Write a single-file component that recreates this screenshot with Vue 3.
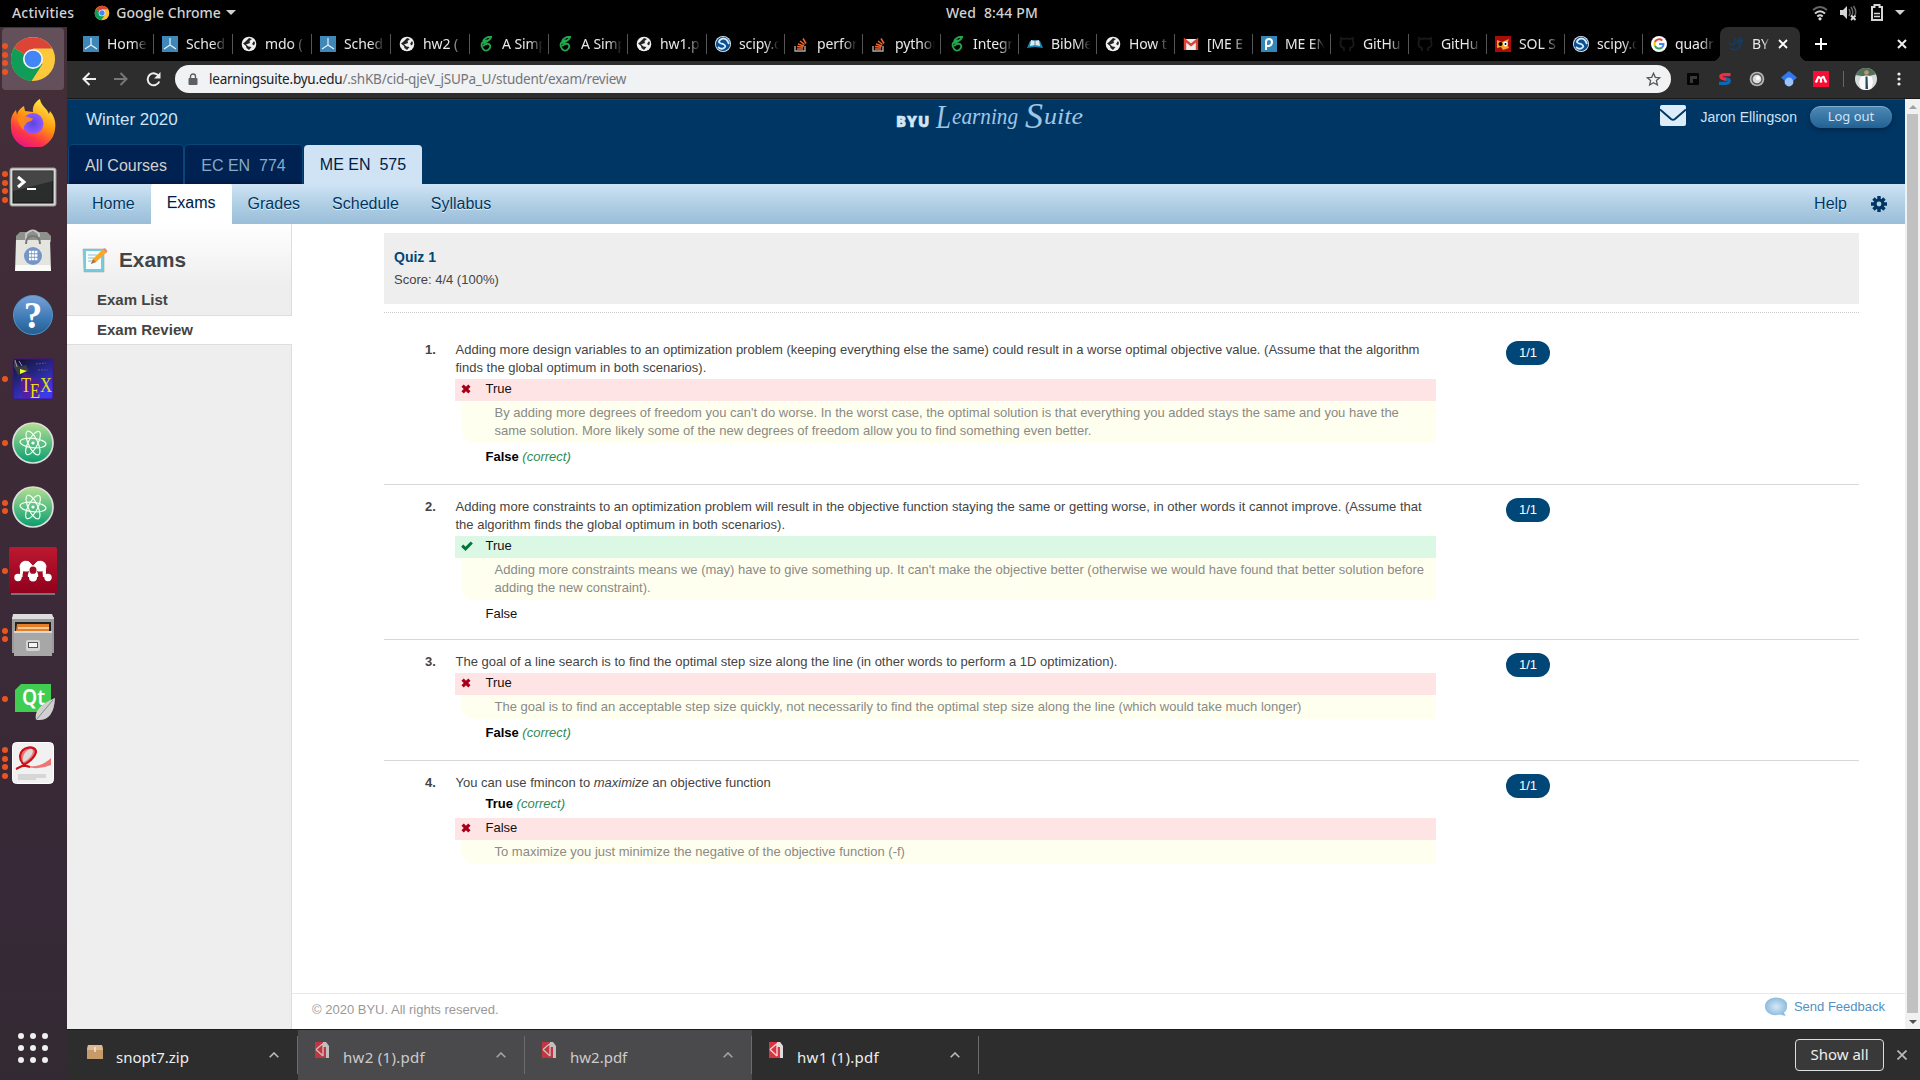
<script setup>
const raw = [
  ['axis', 'Home'], ['axis', 'Sched'], ['globe', 'mdo ('], ['axis', 'Sched'], ['globe', 'hw2 ('],
  ['leaf', 'A Simp'], ['leaf', 'A Simp'], ['globe', 'hw1.p'], ['scipy', 'scipy.o'], ['stack', 'perfor'],
  ['stack', 'python'], ['leaf', 'Integr'], ['book', 'BibMe'], ['globe', 'How t'], ['gmail', '[ME E'],
  ['pp', 'ME EN'], ['github', 'GitHu'], ['github', 'GitHu'], ['sol', 'SOL S'], ['scipy', 'scipy.o'], ['google', 'quadra'],
]
const tabs = raw.map(([icon, label], i) => ({ icon, label, wide: i < 8 }))

const dock = [
  { icon: 'chrome', dots: 4, active: true }, { icon: 'firefox', dots: 0 }, { icon: 'terminal', dots: 4 },
  { icon: 'bag', dots: 0 }, { icon: 'help', dots: 0 }, { icon: 'tex', dots: 1 }, { icon: 'atom', dots: 1 },
  { icon: 'atom', dots: 2 }, { icon: 'mendeley', dots: 1 }, { icon: 'files', dots: 2 }, { icon: 'qt', dots: 1 },
  { icon: 'pdf', dots: 4 },
]

const questions = [
  {
    n: 1,
    text: ['Adding more design variables to an optimization problem (keeping everything else the same) could result in a worse optimal objective value. (Assume that the algorithm', 'finds the global optimum in both scenarios).'],
    answers: [
      { label: 'True', mark: 'wrong', note: ["By adding more degrees of freedom you can't do worse. In the worst case, the optimal solution is that everything you added stays the same and you have the", 'same solution. More likely some of the new degrees of freedom allow you to find something even better.'] },
      { label: 'False', correct: true },
    ],
  },
  {
    n: 2,
    text: ['Adding more constraints to an optimization problem will result in the objective function staying the same or getting worse, in other words it cannot improve. (Assume that', 'the algorithm finds the global optimum in both scenarios).'],
    answers: [
      { label: 'True', mark: 'right', note: ["Adding more constraints means we (may) have to give something up. It can't make the objective better (otherwise we would have found that better solution before", 'adding the new constraint).'] },
      { label: 'False' },
    ],
  },
  {
    n: 3,
    text: ['The goal of a line search is to find the optimal step size along the line (in other words to perform a 1D optimization).'],
    answers: [
      { label: 'True', mark: 'wrong', note: ['The goal is to find an acceptable step size quickly, not necessarily to find the optimal step size along the line (which would take much longer)'] },
      { label: 'False', correct: true },
    ],
  },
  {
    n: 4,
    text: [],
    answers: [
      { label: 'True', correct: true },
      { label: 'False', mark: 'wrong', note: ['To maximize you just minimize the negative of the objective function (-f)'] },
    ],
  },
]

const downloads = [
  { name: 'snopt7.zip', zip: true }, { name: 'hw2 (1).pdf', dim: true }, { name: 'hw2.pdf', dim: true }, { name: 'hw1 (1).pdf' },
]
const grid = [0, 1, 2, 3, 4, 5, 6, 7, 8]
</script>

<template>
  <div class="screen">
    <header class="topbar">
      <div class="top-left">
        <span>Activities</span>
        <svg class="mini" viewBox="0 0 48 48"><circle cx="24" cy="24" r="22" fill="#fbc02d" /><path d="M24 24 5 13A22 22 0 0 1 43 13H24Z" fill="#db4437" /><path d="M24 24 5 13A22 22 0 0 0 22 46L33 29Z" fill="#0f9d58" /><circle cx="24" cy="24" r="10" fill="#fff" /><circle cx="24" cy="24" r="8" fill="#4285f4" /></svg>
        <span class="appname">Google Chrome</span>
        <i class="tri"></i>
      </div>
      <div class="clock">Wed&nbsp; 8:44 PM</div>
      <div class="tray">
        <svg width="16" height="16" viewBox="0 0 16 16" fill="none" stroke="#d5d5d5" stroke-width="2"><path d="M1 5Q8-1 15 5" stroke="#666" /><path d="M3 8.5Q8 4 13 8.5M5.3 11.4Q8 9 10.7 11.4" /><circle cx="8" cy="13.8" r="1.6" fill="#ddd" stroke="none" /></svg>
        <svg width="18" height="16" viewBox="0 0 18 16"><path d="M1 5H4L8 1V14L4 10H1Z" fill="#d5d5d5" /><path d="M10 4Q12 7.500 10 11M12 2Q15.500 7.500 12 12M14.500 1Q18 6 16 10" fill="none" stroke="#666" stroke-width="1.500" /><path d="M12 10.500 16.500 15M16.500 10.500 12 15" stroke="#ddd" stroke-width="1.800" /></svg>
        <svg width="14" height="17" viewBox="0 0 14 17"><path d="M2 3H4.500V1H9.500V3H12V16H2Z" fill="none" stroke="#d5d5d5" stroke-width="2" /><path d="M4 9.500H10M4 12.500H10" stroke="#d5d5d5" stroke-width="1.700" /></svg>
        <i class="tri"></i>
      </div>
    </header>

    <div class="body">
      <nav class="dock">
        <div v-for="(d, i) in dock" :key="i" class="slot" :class="{ on: d.active }">
          <div class="dots"><i v-for="k in d.dots" :key="k"></i></div>
          <svg v-if="d.icon === 'chrome'" width="46" height="46" viewBox="0 0 48 48"><circle cx="24" cy="24" r="23" fill="#fdc93b" /><path d="M24 24 4.100 12.500A23 23 0 0 1 44 13H24Z" fill="#db4437" /><path d="M24 24 4.100 12.500A23 23 0 0 0 22.500 47L34 29Z" fill="#0f9d58" /><circle cx="24" cy="24" r="10.500" fill="#f1f1f1" /><circle cx="24" cy="24" r="8.700" fill="#4285f4" /></svg>
          <svg v-else-if="d.icon === 'firefox'" width="48" height="48" viewBox="0 0 48 48"><defs><linearGradient id="ff" x1="0.800" y1="0" x2="0.300" y2="1"><stop offset="0" stop-color="#fff44f" /><stop offset="0.450" stop-color="#ff980e" /><stop offset="0.750" stop-color="#ff3647" /><stop offset="1" stop-color="#e31587" /></linearGradient><radialGradient id="fp"><stop offset="0" stop-color="#5b45e0" /><stop offset="1" stop-color="#9059ff" /></radialGradient></defs><path d="M2 27C1 19 4 14 7 11L8 16C9 11 12 9 15 7L16 12 24 13C23 7 27 2 31 0 32 7 38 9 40 15L41 12C46 18 47 24 46 30A22 21 0 0 1 2 27Z" fill="url(#ff)" /><circle cx="24" cy="24.500" r="10.500" fill="url(#fp)" /><path d="M8 18C13 15 18 18 24 19.500 23 23 18 22 17 25Q14 27 15 31 9 27 8 18Z" fill="#ff8a16" opacity="0.900" /></svg>
          <svg v-else-if="d.icon === 'terminal'" width="48" height="40" viewBox="0 0 48 40"><rect x="1" y="1" width="46" height="38" rx="2" fill="#d7d7d4" stroke="#999" /><rect x="4" y="4" width="40" height="32" fill="#2b2d2c" stroke="#111" /><path d="M4 4H44V14L4 24Z" fill="#555" opacity="0.600" /><path d="M9 10 15 15 9 20" fill="none" stroke="#fff" stroke-width="3" /><path d="M18 22H27" stroke="#fff" stroke-width="2" /></svg>
          <svg v-else-if="d.icon === 'bag'" width="40" height="44" viewBox="0 0 40 44"><path d="M3 7 7 3H34L38 7V13H3Z" fill="#8f918c" /><path d="M13 14V5Q20-2 26 5V8" fill="none" stroke="#c5c5c0" stroke-width="2" /><path d="M3 11H37L38 42H2Z" fill="#e5e5df" /><path d="M3 36H37L38 42H2Z" fill="#fafaf8" /><path d="M13 15Q13 7 20 7T27 15" fill="none" stroke="#777" stroke-width="2" /><circle cx="20" cy="27" r="9" fill="#7595c7" /><path d="M16 23h2.400M19 23h2.400M22 23h2.400M16 26.500h2.400M19 26.500h2.400M22 26.500h2.400M16 30h2.400M19 30h2.400M22 30h2.400" stroke="#fff" stroke-width="2.300" /></svg>
          <svg v-else-if="d.icon === 'help'" width="42" height="42" viewBox="0 0 42 42"><defs><linearGradient id="hg" x2="0" y2="1"><stop stop-color="#79a1d8" /><stop offset="0.600" stop-color="#3c79b4" /><stop offset="1" stop-color="#245e91" /></linearGradient></defs><circle cx="21" cy="21" r="19.500" fill="url(#hg)" stroke="#5294c9" /><text x="21" y="34" text-anchor="middle" font-size="37" font-weight="bold" font-family="Liberation Serif, serif" fill="#fff">?</text></svg>
          <svg v-else-if="d.icon === 'tex'" width="42" height="42" viewBox="0 0 42 42"><defs><linearGradient id="tg" x2="0.600" y2="1"><stop stop-color="#111126" /><stop offset="1" stop-color="#3b3bec" /></linearGradient></defs><rect x="1" y="1" width="40" height="40" rx="2" fill="url(#tg)" stroke="#4a0d8d" /><path d="M12 14 32 26 24 40H11Q5 26 12 14Z" fill="#6a168f" opacity="0.650" /><path d="M2 2 8 9 14 7 17 13 6 17 2 9Z" fill="#3a3e3f" /><path d="M3 2 5 9M7 3 10 8" stroke="#999" /><path d="M8 11 15 13 8 16Z" fill="#eaff2c" /><path d="M24 6 34 5M26 12 36 12" stroke="#667" stroke-width="0.800" stroke-dasharray="2 1" /><g fill="#f0dc12" font-family="Liberation Serif, serif" font-size="20"><text x="9" y="34" textLength="10" lengthAdjust="spacingAndGlyphs">T</text><text x="18" y="40" textLength="10" lengthAdjust="spacingAndGlyphs">E</text><text x="28" y="34" textLength="12" lengthAdjust="spacingAndGlyphs">X</text></g></svg>
          <svg v-else-if="d.icon === 'atom'" width="42" height="42" viewBox="0 0 42 42"><defs><linearGradient id="ag" x2="0" y2="1"><stop stop-color="#b4df92" /><stop offset="1" stop-color="#079e70" /></linearGradient></defs><circle cx="21" cy="21" r="20" fill="url(#ag)" stroke="#dedede" stroke-width="1.700" /><g fill="none" stroke="#effff2" stroke-width="1.200"><ellipse cx="21" cy="21" rx="13" ry="4.700" transform="rotate(6 21 21)" /><ellipse cx="21" cy="21" rx="13" ry="4.700" transform="rotate(65 21 21)" /><ellipse cx="21" cy="21" rx="13" ry="4.700" transform="rotate(118 21 21)" /></g><circle cx="21" cy="21" r="1.600" fill="#fff" /></svg>
          <svg v-else-if="d.icon === 'mendeley'" width="48" height="48" viewBox="0 0 48 48"><defs><linearGradient id="mg" x2="0" y2="1"><stop stop-color="#bd1831" /><stop offset="1" stop-color="#90001d" /></linearGradient></defs><rect y="0" width="48" height="46" rx="2" fill="url(#mg)" /><path d="M2 47H46" stroke="#bbb" /><path d="M9 30Q13 28 11 19A6 6 0 0 1 22 17Q24 21 26 17A6 6 0 0 1 37 19Q35 28 39 30M20 24 24 30 28 24" fill="#fff" stroke="#fff" /><g fill="#fff"><circle cx="9" cy="30.500" r="3.700" /><circle cx="24" cy="30.500" r="4" /><circle cx="39" cy="30.500" r="3.700" /></g><path d="M14 33Q13 27 14.500 24 17 25 20 24 18 28 19 33ZM29 33Q30 28 28 24 31 25 33.500 24 34 29 34 33Z" fill="#a30c25" /><circle cx="24" cy="23" r="3.500" fill="#a30c25" /></svg>
          <svg v-else-if="d.icon === 'files'" width="42" height="44" viewBox="0 0 42 44"><rect y="4" width="42" height="36" fill="#9b9b9b" /><path d="M1 1H40L42 6H0Z" fill="#ddd" /><rect x="3" y="9" width="36" height="10" fill="#222" /><path d="M5 11H37V18H4Z" fill="#e47c28" /><path d="M6 15H37" stroke="#ffe5b5" stroke-width="1.500" /><path d="M2 18H40V43H2Z" fill="#a7a7a7" /><path d="M2 19H40" stroke="#d9d9d9" stroke-width="2" /><rect x="14" y="27" width="14" height="11" rx="2" fill="#d5d5d5" /><rect x="16.500" y="29.500" width="9" height="5" fill="#f5f5f5" stroke="#555" /></svg>
          <svg v-else-if="d.icon === 'qt'" class="qt" width="40" height="38" viewBox="0 0 40 38"><path d="M6 0H36V28H0V6Z" fill="#41cd52" /><text x="7" y="21" textLength="23" lengthAdjust="spacingAndGlyphs" font-family="Noto Sans, sans-serif" font-size="21" font-weight="600" fill="#fff">Qt</text><path d="M40 14Q39 36 24 36H21Q18 23 40 14Z" fill="#d0d0d0" /><path d="M21 36 38 16" stroke="#888" /></svg>
          <svg v-else width="42" height="42" viewBox="0 0 42 42"><rect x="0.500" y="0.500" width="41" height="41" rx="4" fill="#f1f1f1" stroke="#fff" /><path d="M4 27Q22 19 24 10C24 3 9 4 8 14 7 24 24 30 39 16V23Q25 29 14 24Z" fill="#ed7777" /><path d="M11 20C10 14 13 8 19 7 24 8 18 18 11 20Z" fill="#ddd" /><path d="M4 27Q22 19 24 10C24 3 9 4 8 14 8 20 12 24 18 25" fill="none" stroke="#c91118" stroke-width="2.200" /><path d="M6 33H34M6 35H34M6 37H24" stroke="#bbb" /></svg>
        </div>
        <div class="apps"><i v-for="g in grid" :key="g"></i></div>
      </nav>

      <main class="window">
        <div class="tabstrip">
          <div v-for="(t, i) in tabs" :key="i" class="tab" :class="{ wide: t.wide, last: i === 20 }">
            <svg width="16" height="16" viewBox="0 0 16 16">
              <template v-if="t.icon === 'axis'"><path d="M0 0H16V16H0Z" fill="#3e87b7" /><path d="M8 2V9L2 13M8 9 14 13" fill="none" stroke="#e8f4ff" stroke-width="1.200" /></template>
              <template v-else-if="t.icon === 'globe'"><circle cx="8" cy="8" r="7.300" fill="#f1f1f1" /><path d="M8 2 11 3 8.500 5 9 7 5 8.500 7.500 10.500 10.500 11 8 14 5.500 12 5 10 2 7.500 4 6 5.500 4.500ZM13 5 14 7 13 9.500 11 8Z" fill="#222" /></template>
              <template v-else-if="t.icon === 'leaf'"><path d="M14 1Q8 0 5 5M13 2Q8 7 4 7M9 4Q2 6 4 11 6 16 10 14 14 11 11 8 8 7 5 10" fill="none" stroke="#23a84d" stroke-width="1.800" /></template>
              <template v-else-if="t.icon === 'scipy'"><circle cx="8" cy="8" r="8" fill="#eaf4fa" /><circle cx="8" cy="8" r="7.200" fill="#0a4f92" /><path d="M12 4Q8 1 5 4T8 8Q12 10 9 12T3 11M12 4 14 8" fill="none" stroke="#d4eaff" stroke-width="1.800" /></template>
              <template v-else-if="t.icon === 'stack'"><path d="M2 10V15H12V10" fill="none" stroke="#aaa" stroke-width="1.400" /><path d="M4 13H10M4 10.500 10 11.200M5 8 11 10M7 5 11.500 8.500M10 2.500 13 7.500" stroke="#f1662b" stroke-width="1.500" /></template>
              <template v-else-if="t.icon === 'book'"><path d="M0 12 3 5 8 4 13 5 16 12 8 11Z" fill="#1689b4" /><path d="M3 10 4 4 8 5 12 4 13 10 8 9Z" fill="#dceaf0" /><path d="M8 5V10" stroke="#67818b" /></template>
              <template v-else-if="t.icon === 'gmail'"><path d="M1 3H15V14H1Z" fill="#eee" /><path d="M2 14V4L8 9 14 4V14" fill="none" stroke="#db4437" stroke-width="2.400" /></template>
              <template v-else-if="t.icon === 'pp'"><path d="M0 0H16V16H0Z" fill="#3386b8" /><path d="M5 14V6Q5 3 8 3T11 6 8 10H6" fill="none" stroke="#fff" stroke-width="2" /></template>
              <template v-else-if="t.icon === 'github'"><path d="M5 15V12Q1 11 1.500 7L2 4V2L5 3Q8 2 11 3L14 2V5Q16 11 11 12V15" fill="none" stroke="#171a1c" stroke-width="1.800" /></template>
              <template v-else-if="t.icon === 'sol'"><path d="M0 0H16V16H0Z" fill="#a90d0a" /><path d="M2 4 7 6 14 3 12 8 14 12 8 14 6 11 2 12Z" fill="#f4a32b" /><circle cx="5.500" cy="8" r="2" /><circle cx="10.500" cy="8" r="2.400" fill="#fff" /><circle cx="10.500" cy="8" r="1" /></template>
              <template v-else><circle cx="8" cy="8" r="8" fill="#fff" /><g fill="none" stroke-width="2"><path d="M11.300 4.500A4.700 4.700 0 0 0 3.900 6" stroke="#ea4335" /><path d="M3.900 6A5 5 0 0 0 3.900 10" stroke="#fbbc05" /><path d="M3.900 10A4.700 4.700 0 0 0 11 11.500" stroke="#34a853" /><path d="M11 11.500Q12.700 10 12.500 8H8" stroke="#4285f4" /></g></template>
            </svg>
            <span>{{ t.label }}</span>
          </div>
          <div class="tab active">
            <svg width="16" height="16" viewBox="0 0 16 16"><path d="M1 6Q3 11 7 8T13 1L9 6 15 4 10 9M2 12Q10 17 13 8M8 2 5 8" fill="none" stroke="#143c66" stroke-width="1.400" /></svg>
            <span>BYU</span>
            <svg class="x" width="10" height="10" viewBox="0 0 10 10"><path d="M1 1 9 9M9 1 1 9" stroke="#fff" stroke-width="1.800" /></svg>
          </div>
          <svg class="plus" width="12" height="12" viewBox="0 0 12 12"><path d="M6 0V12M0 6H12" stroke="#fff" stroke-width="2" /></svg>
          <svg class="close" width="10" height="10" viewBox="0 0 10 10"><path d="M1 1 9 9M9 1 1 9" stroke="#eee" stroke-width="2" /></svg>
        </div>

        <div class="toolbar">
          <svg width="14" height="14" viewBox="0 0 14 14"><path d="M14 7H1.500M7.500 1 1.500 7 7.500 13" fill="none" stroke="#eee" stroke-width="2" /></svg>
          <svg class="fwd" width="14" height="14" viewBox="0 0 14 14"><path d="M0 7H12.500M6.500 1 12.500 7 6.500 13" fill="none" stroke="#777" stroke-width="2" /></svg>
          <svg class="reload" width="15" height="15" viewBox="0 0 15 15"><path d="M13 4.500A6 6 0 1 0 13.300 9.500" fill="none" stroke="#eee" stroke-width="2" /><path d="M14.500 0V6.500H8Z" fill="#eee" /></svg>
          <div class="omni">
            <svg width="10" height="13" viewBox="0 0 10 13"><rect x="0.500" y="5" width="9" height="7" rx="1" fill="#5c6064" /><path d="M2.500 5V3.500A2.500 2.500 0 0 1 7.500 3.500V5" fill="none" stroke="#5c6064" stroke-width="1.400" /></svg>
            <span class="url"><b>learningsuite.byu.edu</b>/.shKB/cid-qjeV_jSUPa_U/student/exam/review</span>
            <svg class="star" width="15" height="15" viewBox="0 0 15 15"><path d="M7.500 1.300 9.300 5.300 13.700 5.700 10.400 8.600 11.400 13 7.500 10.700 3.600 13 4.600 8.600 1.300 5.700 5.700 5.300Z" fill="none" stroke="#55585b" stroke-width="1.300" /></svg>
          </div>
          <div class="exts">
            <svg width="16" height="16" viewBox="0 0 16 16"><rect x="2" y="2" width="12" height="12" rx="1" fill="#050505" /><path d="M5 12V5H12V8H8V12Z" fill="#3a3a3a" /></svg>
            <svg width="16" height="16" viewBox="0 0 16 16"><path d="M2 12.300H8Q12.300 12.300 12.300 9.700 12 7.800 8 7.800" fill="none" stroke="#0c68b4" stroke-width="3.200" /><path d="M13.500 3.700H8Q3.800 3.700 3.800 5.700 4 7.900 9 8.300" fill="none" stroke="#ef2d46" stroke-width="3.200" /></svg>
            <svg width="16" height="16" viewBox="0 0 16 16"><circle cx="8" cy="8" r="7.300" fill="#b5b5b5" /><circle cx="8" cy="8" r="5" fill="#ddd" stroke="#555" stroke-width="1.300" /><circle cx="9" cy="7" r="2" fill="#fff" /></svg>
            <svg width="16" height="16" viewBox="0 0 16 16"><path d="M8 0 16 6.500 11 11H5L0 6.500Z" fill="#2f78ee" /><circle cx="8" cy="11" r="4.400" fill="#9bc2ff" /></svg>
            <svg width="16" height="16" viewBox="0 0 16 16"><path d="M0 0H16V16H0Z" fill="#fb0c35" /><path d="M3.500 10Q4.500 8 5 6.500T8 8Q10.500 4.500 11 6.500T12.500 10M8 7V10" fill="none" stroke="#fff" stroke-width="2" /><circle cx="3.300" cy="10.500" r="1.300" fill="#fff" /><circle cx="8" cy="10.500" r="1.300" fill="#fff" /><circle cx="12.700" cy="10.500" r="1.300" fill="#fff" /></svg>
          </div>
          <i class="vsep"></i>
          <svg class="avatar" width="22" height="22" viewBox="0 0 22 22"><defs><clipPath id="av"><circle cx="11" cy="11" r="11" /></clipPath></defs><g clip-path="url(#av)"><path d="M0 0H22V22H0Z" fill="#d5dadb" /><path d="M0 0H22V6L14 8H7L0 7Z" fill="#50705a" /><path d="M6 22 4 14 6 9 10 7.500H13L17 9 18 14 16 22Z" fill="#fafafa" /><circle cx="11.500" cy="4.500" r="2.300" fill="#c39377" /><path d="M10.500 8.500H12.500L13 21H10.500Z" fill="#27495a" /></g></svg>
          <svg class="menu" width="4" height="16" viewBox="0 0 4 16" fill="#eee"><circle cx="2" cy="3" r="1.600" /><circle cx="2" cy="8" r="1.600" /><circle cx="2" cy="13" r="1.600" /></svg>
        </div>

        <div class="viewport">
          <div class="page">
            <div class="masthead">
              <div class="mast-row">
                <span class="term">Winter 2020</span>
                <div class="logo"><b>BYU</b><svg width="152" height="42" viewBox="0 0 152 42"><g fill="#a1c6e3" font-family="Liberation Serif, serif" font-style="italic"><text x="1" y="28" font-size="33" textLength="15" lengthAdjust="spacingAndGlyphs">L</text><text x="17" y="24" font-size="23" textLength="66" lengthAdjust="spacingAndGlyphs">earning</text><text x="90" y="28" font-size="36" textLength="18" lengthAdjust="spacingAndGlyphs">S</text><text x="109" y="24" font-size="23" textLength="39" lengthAdjust="spacingAndGlyphs">uite</text></g></svg></div>
                <div class="user">
                  <svg width="26" height="21" viewBox="0 0 26 21"><rect width="26" height="21" rx="2" fill="#dcecf8" /><path d="M0 4.500 11 14Q13 15.500 15 14L26 4.500" fill="none" stroke="#003663" stroke-width="2" /></svg>
                  <span>Jaron Ellingson</span>
                  <button>Log out</button>
                </div>
              </div>
              <div class="courses"><span class="c1">All Courses</span><span class="c2">EC EN&nbsp; 774</span><span class="cur">ME EN&nbsp; 575</span></div>
            </div>
            <div class="subnav">
              <span>Home</span><span class="sel">Exams</span><span>Grades</span><span>Schedule</span><span>Syllabus</span>
              <span class="help">Help</span>
              <svg width="16" height="16" viewBox="0 0 16 16"><g stroke="#003663" stroke-width="3.400"><path d="M8 0V16M0 8H16M2.500 2.500 13.500 13.500M13.500 2.500 2.500 13.500" /></g><circle cx="8" cy="8" r="5.500" fill="#003663" /><circle cx="8" cy="8" r="2.400" fill="#b3d1e6" /></svg>
            </div>
            <div class="columns">
              <aside>
                <div class="side-head">
                  <svg width="26" height="26" viewBox="0 0 26 26"><path d="M1 2H22V25H2Z" fill="#74cbd9" stroke="#aaa" stroke-width="0.600" /><path d="M4 4H19V22H4Z" fill="#f8fcfc" /><path d="M6 8H15M6 11H13M6 14H11" stroke="#8ac3d0" /><path d="M9 17 11 12 21 2 25 5 14 15Z" fill="#f9a725" /><path d="M21 2 23 1 25.500 4 24 6Z" fill="#db8c86" /><path d="M9 17 11 12 14 15Z" fill="#a77852" /></svg>
                  <span>Exams</span>
                </div>
                <div class="side-item">Exam List</div>
                <div class="side-item here">Exam Review</div>
              </aside>
              <section class="content">
                <div class="sheet">
                  <div class="summary"><strong>Quiz 1</strong><span>Score: 4/4 (100%)</span></div>
                  <div class="dotted"></div>
                  <article v-for="q in questions" :key="q.n">
                    <b class="num">{{ q.n }}.</b>
                    <div class="qbody">
                      <div class="qtext">
                        <div v-if="q.n === 4">You can use fmincon to <em>maximize</em> an objective function</div>
                        <div v-for="l in q.text" :key="l">{{ l }}</div>
                      </div>
                      <template v-for="a in q.answers" :key="a.label">
                        <div class="answer" :class="[a.mark, { good: a.correct }]">
                          <span class="mark">
                            <svg v-if="a.mark === 'wrong'" width="10" height="10" viewBox="0 0 10 10"><path d="M1.600 1.600 8.400 8.400M8.400 1.600 1.600 8.400" stroke="#a60019" stroke-width="3.200" /></svg>
                            <svg v-else-if="a.mark === 'right'" width="12" height="10" viewBox="0 0 12 10"><path d="M1.200 4.700 4.500 7.800 10.800 1.500" fill="none" stroke="#00763a" stroke-width="3" /></svg>
                          </span>
                          <span class="lab">{{ a.label }}</span><em v-if="a.correct">&nbsp;(correct)</em>
                        </div>
                        <div v-if="a.note" class="note"><div v-for="l in a.note" :key="l">{{ l }}</div></div>
                      </template>
                    </div>
                    <span class="badge">1/1</span>
                  </article>
                </div>
                <footer>
                  <span>© 2020 BYU. All rights reserved.</span>
                  <div class="fb"><svg width="22" height="20" viewBox="0 0 22 20"><defs><radialGradient id="bb"><stop stop-color="#d5e8f6" /><stop offset="1" stop-color="#8dbcdd" /></radialGradient></defs><path d="M11 0.500C25 1 24 12 19 15.500L20.500 19 15 17.500C6 20 0 15 0 9.500 0 4 5 0.500 11 0.500Z" fill="url(#bb)" /></svg>Send Feedback</div>
                </footer>
              </section>
            </div>
          </div>
          <div class="scroll"><i class="up"></i><div class="thumb"></div><i class="down"></i></div>
        </div>

        <div class="shelf">
          <div v-for="d in downloads" :key="d.name" class="dl" :class="{ dim: d.dim }">
            <svg v-if="d.zip" width="16" height="16" viewBox="0 0 16 16"><path d="M1 1H15L16 5V15H0V5Z" fill="#c79a6c" /><path d="M1 1H15L16 6H0Z" fill="#dfb891" /><path d="M8 3V8" stroke="#f5e3cb" stroke-width="1.600" /></svg>
            <svg v-else width="16" height="16" viewBox="0 0 16 16"><path d="M1 0H12L15 4V16H1Z" fill="#db3340" /><path d="M9 0H12L15 4V16H12V5H9Z" fill="#ddd" /><path d="M2 7.500 9 1.500M2 7.500 9 14M9 1V14" fill="none" stroke="#f5d5d5" stroke-width="1.400" /></svg>
            <span>{{ d.name }}</span>
            <svg class="caret" width="10" height="6" viewBox="0 0 10 6"><path d="M0.700 5.300 5 1 9.300 5.300" fill="none" stroke="#bbb" stroke-width="1.600" /></svg>
          </div>
          <button class="showall">Show all</button>
          <svg class="sx" width="10" height="10" viewBox="0 0 10 10"><path d="M0.500 0.500 9.500 9.500M9.500 0.500 0.500 9.500" stroke="#bbb" stroke-width="1.700" /></svg>
        </div>
      </main>
    </div>
  </div>
</template>

<style>
body { overflow: hidden; background: #000; }
</style>
<style scoped>
* { box-sizing: border-box; }
svg { display: block; flex: none; }
.screen { width: 1920px; height: 1080px; display: flex; flex-direction: column; background: #000; font-family: "Noto Sans", "Open Sans", sans-serif; white-space: nowrap; }
.topbar { height: 27px; flex: none; display: grid; grid-template-columns: 946px auto 1fr; align-items: center; color: #d2d2d2; font-size: 14px; font-weight: 500; padding: 0 15px 2px 0; }
.top-left { display: flex; align-items: center; padding-left: 12px; }
.top-left span:first-child { letter-spacing: 0.200px; }
.mini { width: 16px; height: 16px; margin: 0 6px 0 20px; }
.tri { border: 5px solid transparent; border-top-color: #d2d2d2; border-bottom: 0; margin-left: 5px; }
.clock { letter-spacing: 0.200px; }
.tray { display: flex; align-items: center; justify-content: flex-end; gap: 12px; }
.tray svg:nth-child(2) { margin-right: 1px; }
.tray svg:first-child { margin-right: -1px; }
.tray .tri { margin-left: -1px; }
.body { flex: 1; display: flex; min-height: 0; }
.dock { width: 67px; flex: none; background: linear-gradient(#442f39, #3d2a37 45%, #372937 85%, #322a32); display: flex; flex-direction: column; }
.slot { height: 64px; display: flex; align-items: center; justify-content: center; position: relative; flex: none; padding-right: 1px; }
.slot.on::before { content: ""; position: absolute; left: 2px; top: 1px; width: 62px; height: 62px; background: #63505a; border-radius: 4px; }
.slot > svg { position: relative; }
.slot > .qt { top: 4px; left: 2px; }
.dots { position: absolute; left: 2px; top: 0; height: 64px; display: flex; flex-direction: column; justify-content: center; gap: 2.500px; }
.dots i { width: 6px; height: 6px; border-radius: 3px; background: #e95420; }
.apps { margin: auto 0 17px 18px; display: grid; grid-template-columns: repeat(3, 6px); gap: 6px; }
.apps i { width: 6px; height: 6px; border-radius: 3px; background: #f0f0f0; }
.window { flex: 1; min-width: 0; display: flex; flex-direction: column; }
.tabstrip { height: 34px; flex: none; display: flex; align-items: stretch; padding-left: 8px; }
.tab { width: 78px; flex: none; display: flex; align-items: center; padding: 0 6px 0 8px; gap: 8px; color: #e8e8e8; font-size: 14px; position: relative; }
.tab.wide { width: 79px; }
.tab::after { content: ""; position: absolute; right: 0; top: 7px; width: 1px; height: 20px; background: #555; }
.tab.last::after, .tab.active::after { display: none; }
.tab span { flex: 1; overflow: hidden; margin-top: -2px; letter-spacing: -0.100px; -webkit-mask-image: linear-gradient(90deg, #000 65%, transparent); mask-image: linear-gradient(90deg, #000 65%, transparent); }
.tab.active { width: 80px; margin-left: -1px; background: #2d2d2d; border-radius: 8px 8px 0 0; padding-right: 12px; }
.tab.active::before { content: ""; position: absolute; left: -8px; right: -8px; bottom: 0; height: 8px; background: radial-gradient(circle at 0 0, transparent 8px, #2d2d2d 8.500px) left / 8px 8px no-repeat, radial-gradient(circle at 100% 0, transparent 8px, #2d2d2d 8.500px) right / 8px 8px no-repeat; }
.plus { margin: 11px 0 0 15px; }
.close { margin: 12px 13px 0 auto; }
.toolbar { height: 38px; flex: none; background: #2d2d2d; border-bottom: 1px solid #191919; display: flex; align-items: center; padding: 0 0 1px 15px; }
.fwd { margin-left: 18px; }
.reload { margin-left: 18px; }
.omni { margin-left: 14px; width: 1496px; height: 28px; border-radius: 14px; background: #f1f2f4; display: flex; align-items: center; padding: 0 10px 0 13px; }
.url { margin-left: 11px; font-size: 13.500px; letter-spacing: -0.230px; color: #72767a; padding-bottom: 1px; }
.url b { font-weight: 400; color: #202124; }
.star { margin-left: auto; }
.exts { display: flex; gap: 16px; margin-left: 14px; }
.vsep { width: 1px; height: 16px; background: #666; margin-left: 14px; }
.avatar { margin-left: 11px; }
.menu { margin-left: 20px; }
.viewport { height: 930px; flex: none; display: flex; }
.page { width: 1838px; display: flex; flex-direction: column; background: #fff; font-family: "Liberation Sans", Arial, sans-serif; color: #444; font-size: 13px; }
.masthead { height: 85px; background: #003663; border-top: 1px solid #0a4a7c; display: flex; flex-direction: column; justify-content: space-between; }
.mast-row { display: grid; grid-template-columns: 829px 1fr auto; padding-right: 13px; height: 44px; }
.term { padding: 10px 0 0 19px; font-size: 17px; color: #cfe3f5; }
.logo { display: flex; color: #d2e6f6; }
.logo b { font: 800 15px "Open Sans", sans-serif; width: 39px; margin-top: 11px; letter-spacing: 1px; -webkit-text-stroke: 0.500px #d2e6f6; }
.user { display: flex; align-items: flex-start; font-size: 14px; color: #cfe3f5; padding-top: 5px; }
.user span { margin: 4px 13px 0 14px; letter-spacing: 0.060px; }
.user button { margin-top: 1px; width: 82px; height: 22px; border: 0; border-top: 1px solid #81add0; border-radius: 11px; background: linear-gradient(#4c88b5, #226293); color: #cfe3f5; font: 13px/17px "Noto Sans", sans-serif; padding: 0 0 2px; box-shadow: 0 2px 4px #00254a; }
.courses { display: flex; gap: 2px; padding-left: 2px; font-size: 16px; line-height: 41px; height: 39px; }
.courses span { height: 39px; border-radius: 4px 4px 0 0; text-align: center; background: linear-gradient(#002253 85%, #001b42); box-shadow: 0 0 0 1px #084677; clip-path: inset(-1px -1px 0 -1px); }
.courses .c1 { width: 114px; color: #d4cfc8; }
.courses .c2 { width: 117px; color: #86a9c6; }
.courses .cur { width: 118px; color: #001c46; background: #cfe3f5; box-shadow: none; line-height: 39px; }
.subnav { height: 40px; flex: none; background: linear-gradient(#cfe3f6, #b0cfe4 50%, #9abdd9); display: flex; align-items: center; padding: 0 18px 0 9px; font-size: 16px; color: #003663; }
.subnav span { padding: 0 16px; line-height: 40px; text-shadow: 0 1px 0 #e2f0fa; }
.subnav .sel { background: #fff; height: 41px; line-height: 39px; margin-top: -1px; border-radius: 4px 4px 0 0; color: #001c46; }
.subnav .help { margin-left: auto; padding-right: 24px; }
.columns { flex: 1; display: flex; min-height: 0; }
aside { width: 225px; background: #eee; border-right: 1px solid #ddd; color: #444; font-weight: 700; }
.side-head { height: 61px; background: linear-gradient(#fff, #eee); display: flex; align-items: center; padding: 11px 0 0 15px; font-size: 20.800px; }
.side-head span { margin-left: 11px; }
.side-item { height: 31px; line-height: 30px; padding-left: 30px; font-size: 15px; border-bottom: 1px solid #ddd; }
.side-item.here { width: 225px; height: 29px; line-height: 28px; background: #fff; position: relative; }
.content { flex: 1; display: flex; flex-direction: column; }
.sheet { margin: 9px 46px 0 92px; }
.summary { height: 71px; background: #eee; padding: 15px 10px; display: flex; flex-direction: column; }
.summary strong { font-size: 14px; line-height: 18px; color: #004778; }
.summary span { line-height: 18px; margin-top: 5px; }
.dotted { margin-top: 8px; height: 1px; background: repeating-linear-gradient(90deg, #ccc 0 1px, transparent 1px 2px); margin-bottom: 15px; }
article { display: flex; align-items: flex-start; padding: 13px 0; border-bottom: 1px solid #d8d8d8; line-height: 18px; }
article:last-child { border: 0; }
.num { width: 71px; padding-left: 41px; }
.qbody { width: 981px; }
.qtext { padding: 0 0 2px 0.500px; }
.answer { height: 22px; line-height: 20px; display: flex; color: #111; }
.answer.good { height: 24px; }
.good .lab { font-weight: 700; color: #000; }
.good em { color: #2d8b57; }
.wrong { background: #ffe4e6; }
.right { background: #dbf8e5; }
.mark { width: 30.500px; padding: 5px 0 0 6px; }
.note { margin: 0 0 4px 7px; padding: 3px 0 3px 32.500px; background: #ffffef; color: #8a8a86; border-bottom-left-radius: 12px; }
.badge { margin-left: 70px; width: 44px; height: 24px; border-radius: 12px; background: #004676; color: #fff; text-align: center; line-height: 23px; }
footer { margin-top: auto; height: 36px; border-top: 1px solid #e8e8e8; display: flex; justify-content: space-between; padding: 0 20px; color: #999; line-height: 31px; }
.fb { display: flex; align-items: flex-start; gap: 7px; color: #5390bf; line-height: 25px; }
.fb svg { margin-top: 3px; }
.scroll { width: 15px; background: #f1f1f1; display: flex; flex-direction: column; align-items: center; padding: 6px 0; }
.up, .down { border: 4px solid transparent; }
.up { border-top: 0; border-bottom-color: #a0a0a0; }
.down { border-bottom: 0; border-top-color: #505050; margin-top: 7px; }
.thumb { width: 11px; height: 899px; margin-top: 5px; background: #c1c1c1; flex: none; }
.shelf { height: 51px; flex: none; background: #2d2d2d; border-top: 1px solid #1c1c1c; display: flex; align-items: center; color: #eee; font-size: 15px; padding-right: 13px; }
.dl { width: 227px; height: 50px; display: flex; align-items: center; position: relative; padding: 0 19px 0 20px; }
.dl:first-child { width: 231px; }
.dl.dim { background: #4a4a4c; color: #ccc; }
.dl.dim > svg { opacity: 0.800; }
.dl::after { content: ""; position: absolute; right: 0; top: 6px; height: 38px; width: 1px; background: #6c6c6c; }
.dl > svg:first-child { margin: -6px 13px 0 0; }
.dl:not(:first-child) > svg:first-child { margin: -10px 13px 0 -4px; }
.dl span { padding-top: 3px; }
.dl:nth-child(2) span, .dl:nth-child(4) span { letter-spacing: 0.300px; }
.caret { margin-left: auto; }
.showall { margin-left: auto; width: 89px; height: 32px; border: 1px solid #ddd; border-radius: 4px; background: #393939; color: #eee; font: 15px "Noto Sans", sans-serif; padding: 0 0 2px; }
.sx { margin-left: 13px; }
</style>
